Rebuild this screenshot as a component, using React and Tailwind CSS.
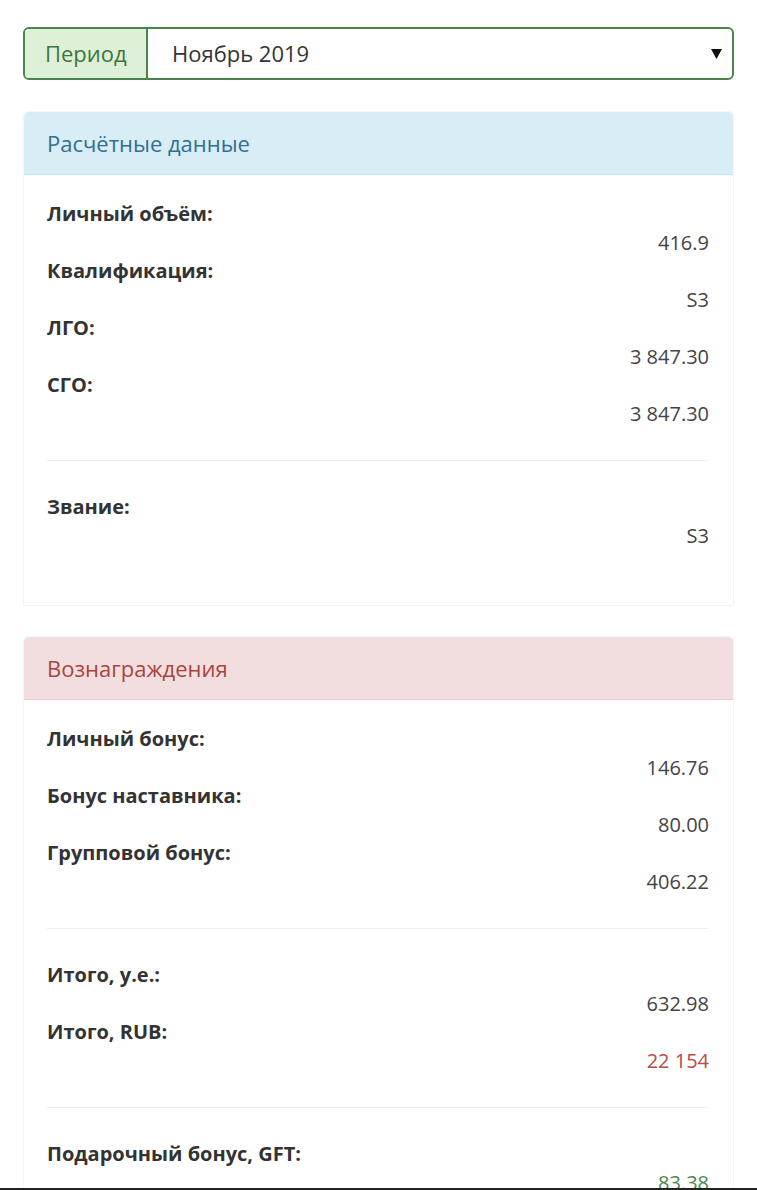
const calcGroups = [
  [
    { label: "Личный объём:", value: "416.9" },
    { label: "Квалификация:", value: "S3" },
    { label: "ЛГО:", value: "3 847.30" },
    { label: "СГО:", value: "3 847.30" },
  ],
  [{ label: "Звание:", value: "S3" }],
];

const rewardGroups = [
  [
    { label: "Личный бонус:", value: "146.76" },
    { label: "Бонус наставника:", value: "80.00" },
    { label: "Групповой бонус:", value: "406.22" },
  ],
  [
    { label: "Итого, у.е.:", value: "632.98" },
    { label: "Итого, RUB:", value: "22 154", tone: "text-[#b94a48]" },
  ],
  [
    { label: "Подарочный бонус, GFT:", value: "83.38", tone: "text-[#4a8a48]" },
  ],
];

function Group({ rows }) {
  return (
    <dl className="mb-8">
      {rows.map((row) => (
        <div key={row.label}>
          <dt className="font-bold text-[#333]">{row.label}</dt>
          <dd className={`text-right ${row.tone || "text-[#444]"}`}>
            {row.value}
          </dd>
        </div>
      ))}
    </dl>
  );
}

function Panel({ title, headingClass, groups }) {
  return (
    <div className="mb-[30px] rounded-t-[5px] border border-[#f5f5f5]">
      <div
        className={`rounded-t-[5px] border-b px-[23px] h-[63px] flex items-center text-[22px] ${headingClass}`}
      >
        {title}
      </div>
      <div className="pl-[23px] pr-6 pt-[25px] pb-[23px]">
        {groups.map((rows, i) => (
          <div key={i}>
            {i > 0 && <hr className="mb-8 border-0 border-t border-[#eee]" />}
            <Group rows={rows} />
          </div>
        ))}
      </div>
    </div>
  );
}

export default function App() {
  return (
    <div
      className="relative min-h-[1190px] bg-white px-[23px] pt-[27px] text-[20px] leading-[28.5px]"
      style={{ fontFamily: '"Open Sans", "Noto Sans", sans-serif' }}
    >
      {/* period selector */}
      <div className="mb-[31px] flex h-[53px] rounded-[6px] border-2 border-[#4b844a] overflow-hidden">
        <div className="flex w-[123px] items-center border-r-2 border-[#4b844a] bg-[#dff0d8] pl-5 text-[22px] text-[#3c763d]">
          Период
        </div>
        <div className="flex flex-1 items-center justify-between pl-6 pr-[10px] text-[22px] text-[#333]">
          <span>Ноябрь 2019</span>
          <svg width="11" height="10" viewBox="0 0 11 10">
            <polygon points="0,0 11,0 5.5,10" fill="#111" />
          </svg>
        </div>
      </div>

      <Panel
        title="Расчётные данные"
        headingClass="bg-[#d9edf7] text-[#31708f] border-[#bce8f1]"
        groups={calcGroups}
      />

      <Panel
        title="Вознаграждения"
        headingClass="bg-[#f2dede] text-[#a94442] border-[#ebccd1]"
        groups={rewardGroups}
      />

      <div className="fixed bottom-0 left-0 right-0 h-[2px] bg-[#222]" />
    </div>
  );
}
